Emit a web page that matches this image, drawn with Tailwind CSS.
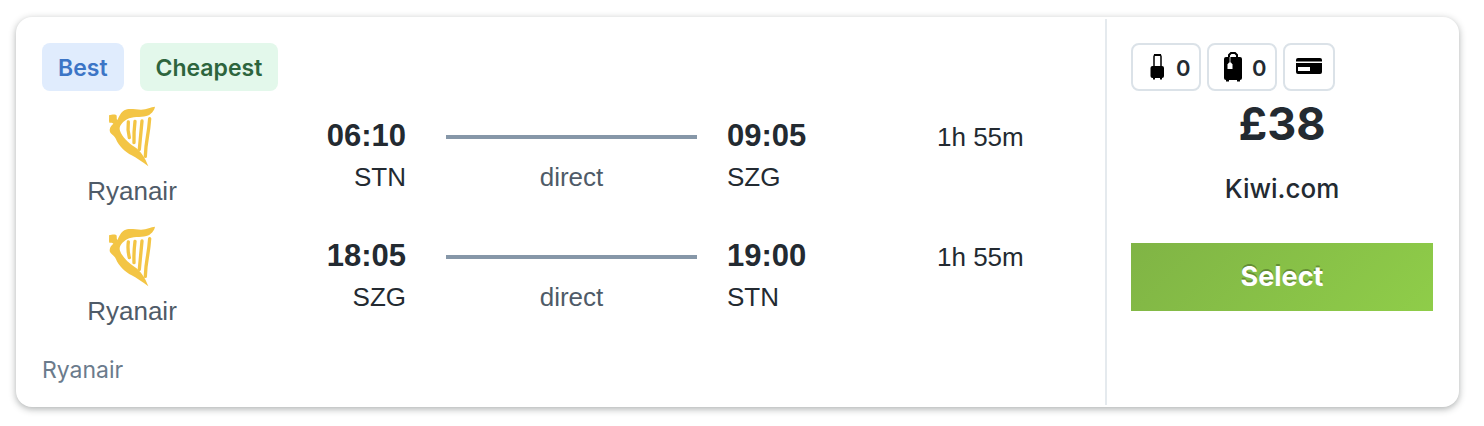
<!DOCTYPE html>
<html lang="en">
<head>
<meta charset="utf-8">
<title>Flight result</title>
<script src="https://cdn.jsdelivr.net/npm/@tailwindcss/browser@4"></script>
</head>
<body class="bg-white font-['Liberation_Sans',sans-serif] text-[#232a31]">
<svg class="hidden" aria-hidden="true">
  <symbol id="harp" viewBox="82 25 150 195">
    <path fill="#f3c545" d="M226 36C224 48 214 60 200 64C182 69 158 64 142 74C126 84 117 96 121 108C127 126 146 144 164 156C182 168 196 188 206 215C188 202 172 190 156 182C136 172 117 154 109 134C105 123 95 120 91 112C88 104 92 94 101 87C98 83 95 84 89 84C87 78 89 72 88 62C96 60 108 57 111 63C112 68 110 73 113 76C119 66 122 54 134 47C146 40 166 45 184 45C202 45 214 36 226 36Z"/>
    <path fill="none" stroke="#f3c545" stroke-width="10" stroke-linecap="round" d="M146 82Q143 105 149 129M166 80Q162 112 163 144M187 79Q183 120 179 164M210 72Q208 100 203 128Q198 155 197 185"/>
  </symbol>
</svg>
<main class="pt-[17px] pr-[25px] pb-4 pl-4">
  <article class="flex rounded-2xl bg-white py-0.5 shadow-[0_2px_7px_rgba(37,45,45,0.38)]">
    <div class="flex-1 pt-6 pb-5 pl-[26px]">
      <div class="flex gap-4 font-['Inter',sans-serif] text-[23px] leading-[30px] font-semibold">
        <span class="rounded-lg bg-[#e0ecfd] px-4 pt-2.5 pb-2 text-[#3c75c6]">Best</span>
        <span class="rounded-lg bg-[#e3f8eb] px-4 pt-2.5 pb-2 text-[#2d653d]">Cheapest</span>
      </div>
      <div class="mt-3 grid grid-cols-[180px_184px_1fr_378px]">
        <div class="flex h-[120px] flex-col items-center">
          <svg class="h-[65px] w-[50px]" aria-hidden="true"><use href="#harp"/></svg>
          <span class="mt-[7px] text-[26px] leading-8 text-[#4f5b68]">Ryanair</span>
        </div>
        <div class="pt-[13px] text-right">
          <div class="text-[31px] leading-10 font-bold">06:10</div>
          <div class="text-[26px] leading-[42px]">STN</div>
        </div>
        <div class="mr-[30px] ml-10 pt-8 text-center">
          <div class="h-1 bg-[#8697a8]"></div>
          <div class="mt-[17px] text-[26px] leading-[42px] text-[#4f5b68]">direct</div>
        </div>
        <div class="grid grid-cols-[210px_1fr] content-start pt-[13px]">
          <div>
            <div class="text-[31px] leading-10 font-bold">09:05</div>
            <div class="text-[26px] leading-[42px]">SZG</div>
          </div>
          <div class="text-[26px] leading-[42px]">1h 55m</div>
        </div>

        <div class="flex h-[120px] flex-col items-center">
          <svg class="h-[65px] w-[50px]" aria-hidden="true"><use href="#harp"/></svg>
          <span class="mt-[7px] text-[26px] leading-8 text-[#4f5b68]">Ryanair</span>
        </div>
        <div class="pt-[13px] text-right">
          <div class="text-[31px] leading-10 font-bold">18:05</div>
          <div class="text-[26px] leading-[42px]">SZG</div>
        </div>
        <div class="mr-[30px] ml-10 pt-8 text-center">
          <div class="h-1 bg-[#8697a8]"></div>
          <div class="mt-[17px] text-[26px] leading-[42px] text-[#4f5b68]">direct</div>
        </div>
        <div class="grid grid-cols-[210px_1fr] content-start pt-[13px]">
          <div>
            <div class="text-[31px] leading-10 font-bold">19:00</div>
            <div class="text-[26px] leading-[42px]">STN</div>
          </div>
          <div class="text-[26px] leading-[42px]">1h 55m</div>
        </div>
      </div>
      <p class="mt-3 font-['Inter',sans-serif] text-[23px] leading-[30px] text-[#6b7b8c]">Ryanair</p>
    </div>

    <div class="w-[354px] border-l-2 border-[#e5eaee] pt-6 pr-[26px] pl-6 text-center font-['Inter',sans-serif]">
      <div class="flex gap-1.5 text-[22px] leading-7 font-semibold">
        <div class="flex h-12 w-[70px] items-center rounded-lg border-2 border-[#dbe2e8] pl-4">
          <svg class="h-7 w-4 shrink-0" viewBox="0 0 16 28" role="img" aria-label="Cabin bags">
            <path fill="none" stroke="#000" stroke-width="1.500" d="M5 13V3.500Q5 2 6.500 2H10.500Q12 2 12 3.500V13"/><path d="M5 1h7v2H5z"/>
            <rect x="1.500" y="13" width="13.500" height="12" rx="2"/><path d="M4 24h2v2.500H4zM11 24h2v2.500h-2z"/>
          </svg>
          <span class="mt-0.5 ml-[11px]">0</span>
        </div>
        <div class="flex h-12 w-[70px] items-center rounded-lg border-2 border-[#dbe2e8] pl-3.5">
          <svg class="h-[30px] w-5 shrink-0" viewBox="0 0 20 30" role="img" aria-label="Checked bags">
            <path fill="none" stroke="#000" stroke-width="2" d="M6 6V3L8 1H12L14 3V6"/>
            <rect x="1" y="5" width="18" height="23" rx="2"/><path d="M3 27h3v2.500H3zM14 27h3v2.500h-3z"/>
            <path fill="none" stroke="#fff" stroke-width=".8" d="M7 5V11"/><path fill="#fff" d="M6 10.500h2l1.500 2v4.500h-5v-4.500z"/>
          </svg>
          <span class="mt-0.5 ml-[9px]">0</span>
        </div>
        <div class="flex h-12 w-[52px] items-center justify-center rounded-lg border-2 border-[#dbe2e8] pb-0.5">
          <svg class="h-4 w-[26px]" viewBox="0 0 26 16" role="img" aria-label="Card payment">
            <path d="M2 0H24Q26 0 26 2V3.500H0V2Q0 0 2 0ZM0 5H26V14Q26 16 24 16H2Q0 16 0 14Z"/><path fill="#fff" d="M2 9h12v4H2z"/>
          </svg>
        </div>
      </div>
      <div class="mt-2 text-[45px] leading-[50px] font-bold">£38</div>
      <div class="mt-5 text-[26px] leading-10 font-medium">Kiwi.com</div>
      <button type="button" class="mt-[34px] h-[68px] w-full cursor-pointer bg-linear-135 from-[#80b445] to-[#8fcd49] text-[27px] font-bold text-white [text-shadow:0_-2px_0_rgba(0,0,0,0.25)]">Select</button>
    </div>
  </article>
</main>
</body>
</html>
